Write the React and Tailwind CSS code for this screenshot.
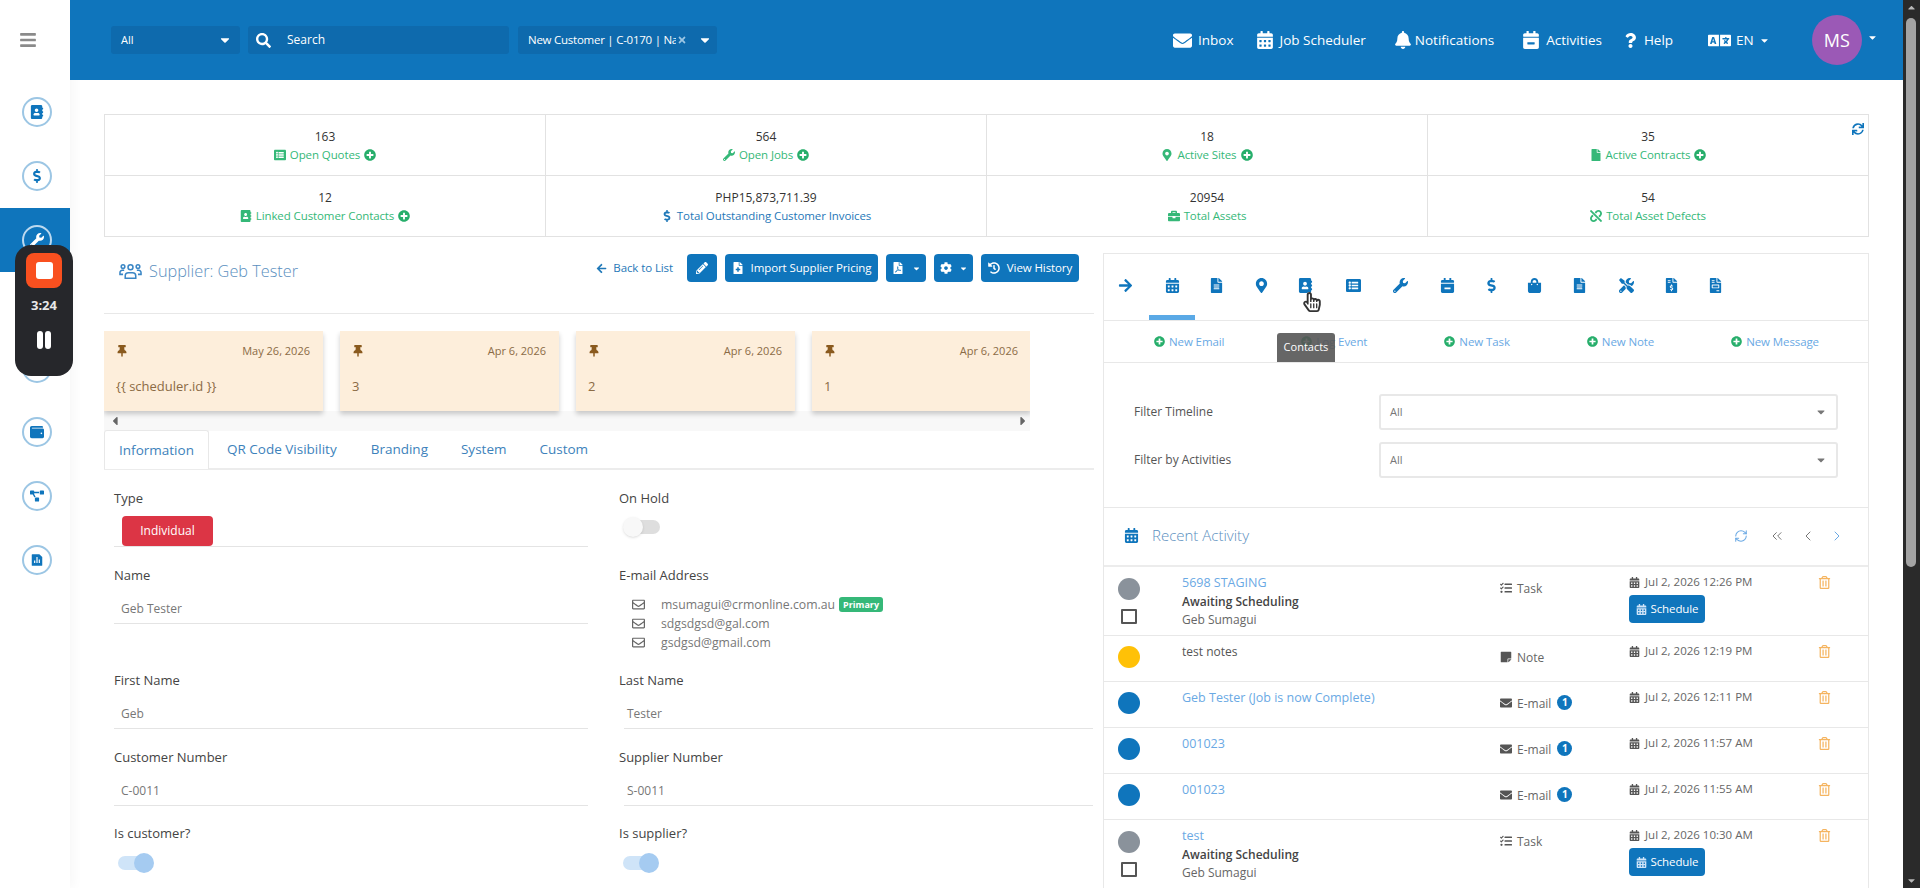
import React from 'react';
import {
  FaBars, FaSearch, FaEnvelope, FaCalendarAlt, FaBell, FaCalendarMinus, FaQuestion, FaLanguage, FaCaretDown, FaCaretLeft, FaCaretRight, FaCaretUp,
  FaSync, FaListAlt, FaWrench, FaMapMarkerAlt, FaFile, FaAddressBook, FaDollarSign, FaBriefcase, FaUnlink, FaPlusCircle, FaArrowLeft, FaArrowRight,
  FaPencilAlt, FaFileMedical, FaFilePdf, FaCog, FaHistory, FaThumbtack, FaFileAlt, FaShoppingBag, FaTools, FaFileInvoiceDollar, FaFileInvoice,
  FaTasks, FaStickyNote, FaRegTrashAlt, FaRegEnvelope, FaWallet, FaProjectDiagram, FaRegHandPointer, FaHandPointer, FaTimes,
} from 'react-icons/fa';
import { RiFileChartFill } from 'react-icons/ri';
import { ChevronsLeft, ChevronLeft, ChevronRight, RefreshCw } from 'lucide-react';

const sideItems = [
  { icon: FaAddressBook },
  { icon: FaDollarSign },
  { icon: FaWrench, active: true },
  { icon: FaMapMarkerAlt },
  { icon: FaFile },
  { icon: FaWallet },
  { icon: FaProjectDiagram },
  { icon: RiFileChartFill },
];

const stats = [
  { value: '163', label: 'Open Quotes', icon: FaListAlt, plus: true },
  { value: '564', label: 'Open Jobs', icon: FaWrench, plus: true },
  { value: '18', label: 'Active Sites', icon: FaMapMarkerAlt, plus: true },
  { value: '35', label: 'Active Contracts', icon: FaFile, plus: true },
  { value: '12', label: 'Linked Customer Contacts', icon: FaAddressBook, plus: true },
  { value: 'PHP15,873,711.39', label: 'Total Outstanding Customer Invoices', icon: FaDollarSign, blue: true },
  { value: '20954', label: 'Total Assets', icon: FaBriefcase },
  { value: '54', label: 'Total Asset Defects', icon: FaUnlink },
];

const notes = [
  { date: 'May 26, 2026', text: '{{ scheduler.id }}' },
  { date: 'Apr 6, 2026', text: '3' },
  { date: 'Apr 6, 2026', text: '2' },
  { date: 'Apr 6, 2026', text: '1' },
];

const tabIcons = [
  { icon: FaArrowRight, w: 'w-[42px]' },
  { icon: FaCalendarAlt, w: 'w-[52px]', active: true },
  { icon: FaFileAlt, w: 'w-[36px]' },
  { icon: FaMapMarkerAlt, w: 'w-[54px]' },
  { icon: FaAddressBook, w: 'w-[34px]' },
  { icon: FaListAlt, w: 'w-[62px]' },
  { icon: FaWrench, w: 'w-[32px]' },
  { icon: FaCalendarMinus, w: 'w-[62px]' },
  { icon: FaDollarSign, w: 'w-[26px]' },
  { icon: FaShoppingBag, w: 'w-[60px]' },
  { icon: FaFileAlt, w: 'w-[30px]' },
  { icon: FaTools, w: 'w-[64px]' },
  { icon: FaFileInvoiceDollar, w: 'w-[26px]' },
  { icon: FaFileInvoice, w: 'w-[62px]' },
];

const activity = [
  { dot: 'bg-[#8a929b]', title: '5698 STAGING', status: 'Awaiting Scheduling', by: 'Geb Sumagui', type: 'Task', date: 'Jul 2, 2026 12:26 PM', schedule: true },
  { dot: 'bg-[#ffc107]', note: 'test notes', type: 'Note', date: 'Jul 2, 2026 12:19 PM' },
  { dot: 'bg-[#0f75bc]', title: 'Geb Tester (Job is now Complete)', type: 'E-mail', date: 'Jul 2, 2026 12:11 PM' },
  { dot: 'bg-[#0f75bc]', title: '001023', type: 'E-mail', date: 'Jul 2, 2026 11:57 AM' },
  { dot: 'bg-[#0f75bc]', title: '001023', type: 'E-mail', date: 'Jul 2, 2026 11:55 AM' },
  { dot: 'bg-[#8a929b]', title: 'test', status: 'Awaiting Scheduling', by: 'Geb Sumagui', type: 'Task', date: 'Jul 2, 2026 10:30 AM', schedule: true },
];

const typeIcons = { Task: FaTasks, Note: FaStickyNote, 'E-mail': FaEnvelope };

const UsersIcon = () => (
  <svg viewBox="0 0 24 17" className="h-[17px] w-[23px]" fill="none" stroke="#3a86c5" strokeWidth="1.6">
    <circle cx="12" cy="4" r="2.6" />
    <circle cx="4.2" cy="3.4" r="1.9" />
    <circle cx="19.8" cy="3.4" r="1.9" />
    <path d="M6.5 15.6v-2.4c0-2 1.6-3.4 3.4-3.4h4.2c1.8 0 3.4 1.4 3.4 3.4v2.4z" />
    <path d="M4.2 11.5H1v-1.7c0-1.4 1-2.6 2.4-2.6h2" />
    <path d="M19.8 11.5H23v-1.7c0-1.4-1-2.6-2.4-2.6h-2" />
  </svg>
);

const NavItem = ({ icon: Icon, label, className, iconClass }) => (
  <div className={`flex items-center gap-[6px] text-[13.5px] text-white ${className}`}>
    <Icon className={iconClass} />
    <span>{label}</span>
  </div>
);

const Field = ({ label, value, right }) => (
  <div>
    <div className="h-5 text-[13px] leading-5 text-[#444]">{label}</div>
    <div className={`flex h-[39px] items-end border-b border-[#e4e4e4] pb-[4px] text-[12px] leading-5 text-[#777] ${right ? 'ml-[5px] pl-[3px]' : 'pl-[7px]'}`}>{value}</div>
  </div>
);

const Toggle = ({ on }) => (
  <div className={`relative h-5 w-[36px] ${on ? 'mt-[10px]' : 'mt-[9px]'}`}>
    {on ? (
      <>
        <div className="absolute top-[3px] left-0 h-[14px] w-[34px] rounded-full bg-[#cfe4f8]" />
        <div className="absolute top-0 left-[16px] h-5 w-5 rounded-full bg-[#a5cbf1]" />
      </>
    ) : (
      <>
        <div className="absolute top-[3px] left-[4px] h-[14px] w-[33px] rounded-full bg-[#dedede]" />
        <div className="absolute top-0 left-0 h-5 w-5 rounded-full bg-[#f8f8f8] shadow-sm" />
      </>
    )}
  </div>
);

const Btn = ({ children, className }) => (
  <div className={`flex h-[28px] items-center rounded-[4px] bg-[#0f75bc] text-[11.5px] tracking-[-0.1px] text-white ${className}`}>{children}</div>
);

const ActivityRow = ({ row }) => {
  const TypeIcon = typeIcons[row.type];
  const tall = !!row.status;
  return (
    <div className={`grid grid-cols-[78px_318px_129px_186px_1fr] border-b border-[#e8e8e8] text-[12px] ${tall ? 'h-[69px]' : 'h-[46px]'}`}>
      <div className={`pl-[14px] ${tall ? 'pt-[11px]' : 'pt-[10px]'}`}>
        <div className={`h-[22px] w-[22px] rounded-full ${row.dot}`} />
        {tall && <div className="mt-[9px] ml-[3px] h-[15px] w-[16px] rounded-[1px] border-2 border-[#555]" />}
      </div>
      <div className="pt-[6px]">
        {row.title && <div className="h-5 text-[12.5px] leading-5 font-medium text-[#6aa9e4]">{row.title}</div>}
        {row.note && <div className="h-5 leading-5 text-[#555]">{row.note}</div>}
        {row.status && <div className="h-[18px] leading-[18px] font-semibold text-[#444]">{row.status}</div>}
        {row.by && <div className="h-[18px] leading-[18px] text-[#666]">{row.by}</div>}
      </div>
      <div className="flex items-start gap-[5px] pt-[13px] text-[#666]">
        <TypeIcon className="mt-[2px] text-[12px] text-[#555]" />
        <span className="leading-[17px]">{row.type}</span>
        {row.type === 'E-mail' && (
          <span className="ml-[1px] flex h-[15px] w-[15px] items-center justify-center rounded-full bg-[#0f75bc] text-[10px] font-bold text-white">1</span>
        )}
      </div>
      <div className="pt-[5px]">
        <div className="flex h-5 items-center gap-[5px] text-[11.5px] text-[#666]">
          <FaCalendarAlt className="text-[11px] text-[#555]" />
          <span>{row.date}</span>
        </div>
        {row.schedule && (
          <Btn className="mt-[3px] w-[76px] justify-center gap-1">
            <FaCalendarAlt className="text-[11px] text-[#cfe4f8]" />
            Schedule
          </Btn>
        )}
      </div>
      <div className="pt-[9px] pl-[3px]">
        <FaRegTrashAlt className="text-[13px] text-[#f5b45f]" />
      </div>
    </div>
  );
};

const App = () => {
  return (
    <div className="relative flex h-[888px] w-[1920px] overflow-hidden bg-white font-['Open_Sans',sans-serif]">
      {/* Sidebar */}
      <aside className="w-[70px] shrink-0 shadow-[4px_0_10px_rgba(0,0,0,0.03)]">
        <div className="flex h-20 items-center justify-center pr-[14px]">
          <FaBars className="text-[18px] text-[#8a8a8a]" />
        </div>
        {sideItems.map((item, i) => {
          const Icon = item.icon;
          return (
            <div key={i} className={`flex h-16 items-center justify-center pl-[4px] ${item.active ? 'bg-[#0f75bc]' : ''}`}>
              <div className={`flex h-[30px] w-[30px] items-center justify-center rounded-full border-2 ${item.active ? 'border-[#bcd9ef] text-white' : 'border-[#9cc6e4] text-[#0f75bc]'}`}>
                <Icon className="text-[14px]" />
              </div>
            </div>
          );
        })}
      </aside>

      {/* Main */}
      <div className="min-w-0 flex-1">
        <header className="flex h-20 items-center bg-[#0f75bc] pl-[41px]">
          <div className="flex h-7 w-[129px] items-center justify-between rounded-[3px] bg-[#0e6aad] pr-[8px] pl-[10px] text-[11px] text-white">
            All
            <FaCaretDown className="text-[14px]" />
          </div>
          <div className="ml-2 flex h-7 w-[261px] items-center rounded-[3px] bg-[#0e6aad] pl-2 text-[12px] text-white">
            <FaSearch className="text-[15px]" />
            <span className="ml-4">Search</span>
          </div>
          <div className="ml-[9px] flex h-7 w-[199px] items-center rounded-[3px] bg-[#0e6aad] pl-[10px] text-[11.5px] tracking-[-0.25px] text-white">
            <span className="w-[148px] overflow-hidden whitespace-nowrap">New Customer | C-0170 | Name</span>
            <FaTimes className="ml-[1px] text-[10px] text-[#9cc6e4]" />
            <FaCaretDown className="ml-[11px] text-[14px]" />
          </div>
          <NavItem icon={FaEnvelope} label="Inbox" className="ml-[456px]" iconClass="text-[19px]" />
          <NavItem icon={FaCalendarAlt} label="Job Scheduler" className="ml-[22px]" iconClass="text-[18px]" />
          <NavItem icon={FaBell} label="Notifications" className="ml-[28px] !gap-[3px]" iconClass="text-[18px]" />
          <NavItem icon={FaCalendarMinus} label="Activities" className="ml-[28px]" iconClass="text-[18px]" />
          <NavItem icon={FaQuestion} label="Help" className="ml-[21px]" iconClass="text-[15px]" />
          <div className="ml-[35px] flex items-center gap-[5px] text-[13.5px] text-white">
            <FaLanguage className="text-[23px]" />
            EN
            <FaCaretDown className="text-[11px]" />
          </div>
          <div className="ml-[42px] flex h-[50px] w-[50px] items-center justify-center rounded-full bg-[#9b59b6] text-[18px] text-white">MS</div>
          <FaCaretDown className="mb-[6px] ml-[5px] text-[11px] text-white" />
        </header>

        <div className="px-[34px] pt-[34px]">
          {/* Stats */}
          <div className="relative grid grid-cols-4 border-t border-l border-[#e2e2e2]">
            {stats.map((s) => {
              const Icon = s.icon;
              return (
                <div key={s.label} className="h-[61px] border-r border-b border-[#e2e2e2] pt-[13px] text-center text-[12px] leading-[18px]">
                  <div className="text-[#333]">{s.value}</div>
                  <div className={`flex items-center justify-center gap-1 text-[11.5px] tracking-[-0.1px] ${s.blue ? 'text-[#1f78b8]' : 'text-[#35b878]'}`}>
                    <Icon className="text-[12px]" />
                    <span>{s.label}</span>
                    {s.plus && <FaPlusCircle className="text-[12px] text-[#27ae6b]" />}
                  </div>
                </div>
              );
            })}
            <FaSync className="absolute top-[8px] right-[5px] text-[12px] text-[#0f75bc]" />
          </div>

          <div className="mt-[17px] flex gap-[9px]">
            {/* Left column */}
            <div className="w-[990px] shrink-0">
              <div className="flex h-[60px] items-start border-b border-[#e8e8e8] pr-[15px]">
                <div className="mt-[5px] ml-[15px] flex items-center gap-[7px] text-[16.3px] font-light text-[#5b8fc0]">
                  <UsersIcon />
                  <span>Supplier: Geb Tester</span>
                </div>
                <div className="ml-auto flex items-center text-[11.5px] tracking-[-0.1px]">
                  <div className="flex items-center gap-[6px] text-[#1f78b8]">
                    <FaArrowLeft className="text-[11px]" />
                    Back to List
                  </div>
                  <Btn className="ml-[14px] w-[30px] justify-center"><FaPencilAlt className="text-[12px]" /></Btn>
                  <Btn className="ml-2 w-[153px] justify-center gap-[7px]"><FaFileMedical className="text-[12px]" />Import Supplier Pricing</Btn>
                  <Btn className="ml-2 w-[40px] justify-center gap-2"><FaFilePdf className="text-[12px]" /><FaCaretDown className="text-[9px]" /></Btn>
                  <Btn className="ml-2 w-[39px] justify-center gap-[7px]"><FaCog className="text-[12px]" /><FaCaretDown className="text-[9px]" /></Btn>
                  <Btn className="ml-2 w-[98px] justify-center gap-[7px]"><FaHistory className="text-[12px]" />View History</Btn>
                </div>
              </div>

              {/* Pinned notes */}
              <div className="mt-[17px] w-[926px] overflow-hidden">
                <div className="flex gap-[17px]">
                  {notes.map((n, i) => (
                    <div key={i} className="h-20 w-[219px] shrink-0 bg-[#fdeedb] pt-[12px] pr-[13px] pl-3 shadow-[0_3px_5px_rgba(0,0,0,0.2)]">
                      <div className="flex items-center justify-between text-[11px] text-[#8b6b45]">
                        <FaThumbtack className="text-[12px] text-[#8a5a1e]" />
                        {n.date}
                      </div>
                      <div className="mt-[17px] text-[13px] text-[#8b6b45]">{n.text}</div>
                    </div>
                  ))}
                </div>
                <div className="flex h-5 items-center justify-between bg-[#f8f8f8] pl-1 text-[14px] text-[#666]">
                  <FaCaretLeft />
                  <FaCaretRight />
                </div>
              </div>

              {/* Tabs */}
              <div className="flex h-[39px] items-center border-b-2 border-[#ececec] text-[13.5px] text-[#3d82bb]">
                <div className="flex h-[39px] w-[105px] items-center justify-center rounded-t-[3px] border border-b-0 border-[#e8e8e8] bg-white">Information</div>
                <div className="ml-[18px]">QR Code Visibility</div>
                <div className="ml-[34px]">Branding</div>
                <div className="ml-[33px]">System</div>
                <div className="ml-[33px]">Custom</div>
              </div>

              {/* Form */}
              <div className="grid grid-cols-[474px_474px] grid-rows-[77px_105px_77px_76px_auto] gap-x-[31px] pt-[18px] pl-[10px]">
                <div>
                  <div className="h-5 text-[13px] leading-5 text-[#444]">Type</div>
                  <div className="mt-2 h-[31px] border-b border-[#e4e4e4] pl-2">
                    <div className="flex h-[30px] w-[91px] items-center justify-center rounded-[4px] bg-[#dc3545] text-[12px] text-white">Individual</div>
                  </div>
                </div>
                <div>
                  <div className="h-5 text-[13px] leading-5 text-[#444]">On Hold</div>
                  <div className="ml-1"><Toggle /></div>
                </div>
                <Field label="Name" value="Geb Tester" />
                <div>
                  <div className="h-5 text-[13px] leading-5 text-[#444]">E-mail Address</div>
                  <div className="mt-[10px] text-[12.25px] leading-[19px] text-[#777]">
                    {['msumagui@crmonline.com.au', 'sdgsdgsd@gal.com', 'gsdgsd@gmail.com'].map((mail, i) => (
                      <div key={mail} className="flex items-center pl-[13px]">
                        <FaRegEnvelope className="text-[13px] text-[#666]" />
                        <span className="ml-4">{mail}</span>
                        {i === 0 && <span className="ml-1 rounded-[3px] bg-[#35b878] px-1 text-[9px] leading-[15px] font-bold text-white">Primary</span>}
                      </div>
                    ))}
                  </div>
                </div>
                <Field label="First Name" value="Geb" />
                <Field label="Last Name" value="Tester" right />
                <Field label="Customer Number" value="C-0011" />
                <Field label="Supplier Number" value="S-0011" right />
                <div>
                  <div className="h-5 text-[13px] leading-5 text-[#444]">Is customer?</div>
                  <div className="ml-1"><Toggle on /></div>
                </div>
                <div>
                  <div className="h-5 text-[13px] leading-5 text-[#444]">Is supplier?</div>
                  <div className="ml-1"><Toggle on /></div>
                </div>
              </div>
            </div>

            {/* Right column */}
            <div className="-mt-px min-w-0 flex-1 border-x border-t border-[#e8e8e8]">
              <div className="flex h-[67px] border-b border-[#e8e8e8]">
                {tabIcons.map((t, i) => {
                  const Icon = t.icon;
                  return (
                    <div key={i} className={`relative flex items-center justify-center pb-[3px] text-[#0f75bc] ${t.w}`}>
                      <Icon className="text-[15px]" />
                      {t.active && <div className="absolute bottom-0 left-[3px] h-[5px] w-[46px] bg-[#5aa9e6]" />}
                    </div>
                  );
                })}
              </div>
              <div className="flex h-[42px] items-center gap-[77px] border-b border-[#e8e8e8] pl-[50px] text-[11.5px] tracking-[-0.1px] text-[#6aa9e4]">
                {['New Email', 'Log Event', 'New Task', 'New Note', 'New Message'].map((label) => (
                  <div key={label} className="flex items-center gap-1">
                    <FaPlusCircle className="text-[11px] text-[#27ae6b]" />
                    {label}
                  </div>
                ))}
              </div>
              <div className="flex flex-col gap-3 border-b border-[#e8e8e8] pt-[31px] pr-[30px] pb-[29px] pl-[30px]">
                {['Filter Timeline', 'Filter by Activities'].map((label) => (
                  <div key={label} className="flex items-center justify-between text-[12px] text-[#555]">
                    <span>{label}</span>
                    <div className="flex h-[36px] w-[459px] items-center justify-between rounded-[3px] border-2 border-[#e8e8e8] pr-[9px] pl-[9px] text-[11px] text-[#777]">
                      All
                      <FaCaretDown className="text-[12px] text-[#777]" />
                    </div>
                  </div>
                ))}
              </div>
              <div className="flex h-[59px] items-center border-b-2 border-[#ececec] pr-[23px] pb-[2px] pl-[20px]">
                <FaCalendarAlt className="text-[15px] text-[#0f75bc]" />
                <span className="ml-[13px] text-[15px] font-light text-[#5b8fc0]">Recent Activity</span>
                <div className="ml-auto flex items-center">
                  <RefreshCw size={14} strokeWidth={1.75} className="text-[#6aa9e4]" />
                  <ChevronsLeft size={16} strokeWidth={1.5} className="ml-[21px] text-[#777]" />
                  <ChevronLeft size={16} strokeWidth={1.5} className="ml-[15px] text-[#777]" />
                  <ChevronRight size={16} strokeWidth={1.5} className="ml-[13px] text-[#6aa9e4]" />
                </div>
              </div>
              {activity.map((row, i) => <ActivityRow key={i} row={row} />)}
            </div>
          </div>
        </div>
      </div>

      {/* Browser scrollbar */}
      <div className="relative flex w-[17px] shrink-0 flex-col items-center justify-between bg-[#2a2a2a] py-[2px] text-[11px] text-[#b8b8b8]">
        <FaCaretUp />
        <div className="absolute top-[18px] left-[3px] h-[549px] w-[10px] rounded-full bg-[#a3a3a3]" />
        <FaCaretDown />
      </div>

      {/* Screen recorder widget */}
      <div className="absolute top-[245px] left-[15px] flex h-[131px] w-[58px] flex-col items-center rounded-[16px] bg-[#26272b] pt-2">
        <div className="flex h-[35px] w-[36px] items-center justify-center rounded-[8px] bg-[#f9501f]">
          <div className="h-[17px] w-[17px] rounded-[3px] bg-white" />
        </div>
        <div className="mt-[8px] text-[13px] leading-[18px] font-bold text-[#e8e8e8]">3:24</div>
        <div className="mt-[17px] flex gap-[2px]">
          <div className="h-[18px] w-[6px] rounded-[3px] bg-white" />
          <div className="h-[18px] w-[6px] rounded-[3px] bg-white" />
        </div>
      </div>

      {/* Tooltip + pointer */}
      <div className="absolute top-[333px] left-[1277px] flex h-[29px] w-[58px] items-center justify-center rounded-t-[3px] bg-[#555]/90 text-[11px] text-white">Contacts</div>
      <div className="absolute top-[292px] left-[1302px] text-[20px]">
        <FaHandPointer className="absolute top-0 left-0 text-white" />
        <FaRegHandPointer className="relative text-[#333]" />
      </div>
    </div>
  );
};

export default App;
